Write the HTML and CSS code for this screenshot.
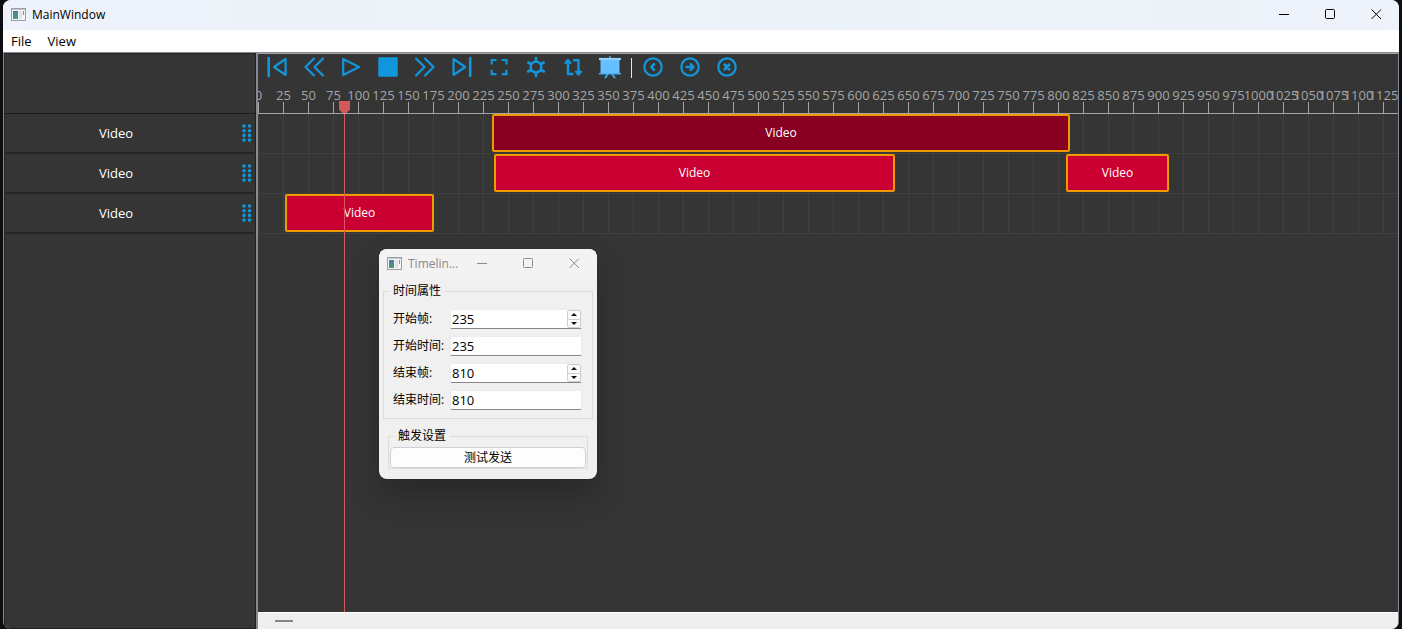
FILE: index.html
```html
<!DOCTYPE html>
<html lang="zh-CN">
<head>
<meta charset="utf-8">
<title>MainWindow</title>
<link rel="stylesheet" href="styles.css">
</head>
<body>
<svg class="defs" aria-hidden="true">
  <defs>
    <linearGradient id="pane" x1="0" y1="0" x2="0" y2="1">
      <stop offset="0" stop-color="#4a7d9c"/><stop offset="1" stop-color="#4f9a78"/>
    </linearGradient>
    <symbol id="app" viewBox="0 0 15 13">
      <rect x=".5" y=".5" width="14" height="12" fill="#f4f5f6" stroke="#9a9fa5"/>
      <path d="M1 1.5h13" stroke="#c3c8cc"/>
      <rect x="2" y="3" width="5" height="8" fill="url(#pane)"/>
      <rect x="8" y="3" width="3" height="8" fill="#e2e2e2"/>
      <rect x="12" y="3" width="1" height="4" fill="#6fa08f"/>
    </symbol>
    <symbol id="min" viewBox="0 0 11 11"><path d="M0 5.5h10" stroke="currentColor"/></symbol>
    <symbol id="max" viewBox="0 0 11 11"><rect x=".5" y=".5" width="9" height="9" rx="1" fill="none" stroke="currentColor"/></symbol>
    <symbol id="close" viewBox="0 0 11 11"><path d="M.5.5l9.500 9.500M10 .5L.5 10" stroke="currentColor"/></symbol>
    <symbol id="grip" viewBox="0 0 10 18">
      <g fill="#1296db"><circle cx="2" cy="2" r="1.800"/><circle cx="7.500" cy="2" r="1.800"/><circle cx="2" cy="6.700" r="1.800"/><circle cx="7.500" cy="6.700" r="1.800"/><circle cx="2" cy="11.400" r="1.800"/><circle cx="7.500" cy="11.400" r="1.800"/><circle cx="2" cy="16.100" r="1.800"/><circle cx="7.500" cy="16.100" r="1.800"/></g>
    </symbol>
  </defs>
</svg>
<div class="window">
  <header class="titlebar">
    <svg class="app-icon"><use href="#app"/></svg>
    <span class="title">MainWindow</span>
    <button class="sys" aria-label="Minimize"><svg><use href="#min"/></svg></button>
    <button class="sys" aria-label="Maximize"><svg><use href="#max"/></svg></button>
    <button class="sys" aria-label="Close"><svg><use href="#close"/></svg></button>
  </header>
  <nav class="menubar">
    <button class="menu">File</button>
    <button class="menu">View</button>
  </nav>
  <main class="split">
    <aside class="tracks">
      <div class="tracks-head"></div>
      <div class="track"><span class="track-name">Video</span><svg class="grip"><use href="#grip"/></svg></div>
      <div class="track"><span class="track-name">Video</span><svg class="grip"><use href="#grip"/></svg></div>
      <div class="track"><span class="track-name">Video</span><svg class="grip"><use href="#grip"/></svg></div>
    </aside>
    <section class="timeline">
      <div class="toolbar">
        <button class="tool" aria-label="First frame"><svg viewBox="0 0 25 25"><path d="M3.700 3v18" stroke-width="2.600"/><path d="M20.600 4v16L9 12z"/></svg></button>
        <button class="tool" aria-label="Rewind"><svg viewBox="0 0 25 25"><path d="M12 3.500L3.500 12l8.500 8.500M21 3.500L12.500 12l8.500 8.500"/></svg></button>
        <button class="tool" aria-label="Play"><svg viewBox="0 0 25 25"><path d="M4.200 4v16L20 12z"/></svg></button>
        <button class="tool" aria-label="Stop"><svg viewBox="0 0 25 25"><rect x="3" y="3" width="18" height="18" fill="#1296db" stroke-width="1.500"/></svg></button>
        <button class="tool" aria-label="Forward"><svg viewBox="0 0 25 25"><path d="M3 3.500l8.500 8.500L3 20.500M12 3.500l8.500 8.500-8.500 8.500"/></svg></button>
        <button class="tool" aria-label="Last frame"><svg viewBox="0 0 25 25"><path d="M3.500 4v16L15.200 12z"/><path d="M20.200 3v18" stroke-width="2.600"/></svg></button>
        <button class="tool" aria-label="Fit"><svg viewBox="0 0 25 25"><path d="M9.500 5H4.700v4.500M14.700 5h4.800v4.500M9.500 19.200H4.700v-4.500M14.700 19.200h4.800v-4.500" stroke-linejoin="miter" stroke-linecap="butt"/></svg></button>
        <button class="tool" aria-label="Settings"><svg viewBox="0 0 25 25"><circle cx="12" cy="12" r="5.300" stroke-width="2.500"/><path d="M12 3v3M12 18v3M4.200 7.500l2.600 1.500M17.200 15l2.600 1.500M19.800 7.500L17.200 9M6.800 15l-2.600 1.500" stroke-width="2.600"/></svg></button>
        <button class="tool" aria-label="Loop"><svg viewBox="0 0 25 25"><path d="M7 6v13h4.500M13 5.300h4.500V18" stroke-width="2.400"/><path d="M4 8L7 4.500 10 8zM14.500 16.500h6l-3 3.500z" fill="#1296db" stroke-width="1.500"/></svg></button>
        <button class="tool" aria-label="Presentation"><svg viewBox="0 0 25 25"><path d="M12 2v2M9.500 19.500L7.500 22.500M14.500 19.500l2 3" stroke="#3aa4ec" stroke-width="2"/><rect x="2.500" y="4" width="19" height="15" fill="#66bfff" stroke="none"/><path d="M1 4h22" stroke="#8fd0ff" stroke-linecap="butt"/><path d="M1 18.700h22" stroke="#50b0f8" stroke-width="1.500" stroke-linecap="butt"/></svg></button>
        <span class="tool-sep"></span>
        <button class="tool" aria-label="Previous"><svg viewBox="0 0 25 25"><circle cx="12" cy="12" r="8.700"/><path d="M13 9.200L10.400 12l2.600 2.800" stroke-width="2.600"/></svg></button>
        <button class="tool" aria-label="Next"><svg viewBox="0 0 25 25"><circle cx="12" cy="12" r="8.700"/><path d="M8.500 12h7M12.700 9.200l2.800 2.800-2.800 2.800" stroke-width="2.500"/></svg></button>
        <button class="tool" aria-label="Remove"><svg viewBox="0 0 25 25"><circle cx="12" cy="12" r="8.700"/><path d="M9.800 9.800l4.400 4.400M14.200 9.800l-4.400 4.400" stroke-width="2.800"/></svg></button>
      </div>
      <div class="ruler" id="ruler"></div>
      <div class="lanes">
        <div class="lane"><div class="clip selected" style="left:234px;width:578px">Video</div></div>
        <div class="lane">
          <div class="clip" style="left:236px;width:401px">Video</div>
          <div class="clip" style="left:808px;width:103px">Video</div>
        </div>
        <div class="lane"><div class="clip" style="left:27px;width:149px">Video</div></div>
      </div>
      <div class="playhead" style="left:80px"><svg viewBox="0 0 13 13"><path d="M1 0h11v8.500L8.500 12h-4L1 8.500z" fill="#d25a5a"/></svg></div>
      <div class="scrollbar"><span class="thumb"></span></div>
    </section>
  </main>
</div>

<form class="dialog" onsubmit="return false">
  <header class="dialog-bar">
    <svg class="app-icon"><use href="#app"/></svg>
    <span class="title">Timelin...</span>
    <button type="button" class="sys" aria-label="Minimize"><svg><use href="#min"/></svg></button>
    <button type="button" class="sys" aria-label="Maximize"><svg><use href="#max"/></svg></button>
    <button type="button" class="sys" aria-label="Close"><svg><use href="#close"/></svg></button>
  </header>
  <div class="dialog-body">
    <fieldset class="group fields">
      <legend>时间属性</legend>
      <label for="sf">开始帧:</label>
      <div class="field spin"><input id="sf" type="text" inputmode="numeric" value="235"><span class="steps"><button type="button" class="up" aria-label="Up"></button><button type="button" class="down" aria-label="Down"></button></span></div>
      <label for="st">开始时间:</label>
      <div class="field"><input id="st" type="text" value="235"></div>
      <label for="ef">结束帧:</label>
      <div class="field spin"><input id="ef" type="text" inputmode="numeric" value="810"><span class="steps"><button type="button" class="up" aria-label="Up"></button><button type="button" class="down" aria-label="Down"></button></span></div>
      <label for="et">结束时间:</label>
      <div class="field"><input id="et" type="text" value="810"></div>
    </fieldset>
    <fieldset class="group trigger">
      <legend>触发设置</legend>
      <button type="button" class="send">测试发送</button>
    </fieldset>
  </div>
</form>
<script src="ruler.js"></script>
</body>
</html>
```
FILE: styles.css
```css
* { box-sizing: border-box; }
body {
  margin: 0;
  height: 100vh;
  overflow: hidden;
  background: #0d0e12;
  font: 12px/16px "Open Sans", "Noto Sans CJK SC", sans-serif;
  color: #000;
}
button { font: inherit; color: inherit; background: none; border: 0; padding: 0; margin: 0; }
.defs { position: absolute; width: 0; height: 0; }

.window {
  height: 100vh;
  margin: 0 3px;
  display: flex;
  flex-direction: column;
  border-radius: 8px;
  overflow: hidden;
  background: #fff;
}
.titlebar, .dialog-bar { display: flex; align-items: center; flex: none; padding-left: 8px; }
.titlebar { height: 30px; background: linear-gradient(90deg, #eef2fb, #ecf3f8 60%, #eef2fb); padding-bottom: 2px; }
.app-icon { width: 15px; height: 13px; flex: none; }
.title { flex: 1; margin-left: 6px; padding-top: 2px; white-space: nowrap; }
.sys { width: 46px; height: 28px; display: flex; align-items: center; justify-content: center; flex: none; }
.sys svg { width: 11px; height: 11px; }

.menubar { height: 22px; flex: none; display: flex; gap: 16px; padding-left: 8px; align-items: center; font-size: 13px; }

.split { flex: 1; min-height: 0; display: flex; border: 1px solid #868a94; border-bottom: 0; background: #353535; color: #fff; }
.tracks { width: 254px; flex: none; border-right: 2px solid #868a94; box-shadow: inset 1px 1px #252525, inset -1px -1px #202020; }
.tracks-head { height: 61px; border-bottom: 1px solid #1c1c1c; }
.track { height: 40px; display: flex; align-items: center; border-bottom: 2px solid #262626; padding: 0 4px 0 0; }
.track-name { flex: 1; text-align: center; padding-right: 14px; font-size: 13px; }
.grip { width: 10px; height: 18px; flex: none; }

.timeline { position: relative; flex: 1; min-width: 0; display: flex; flex-direction: column; overflow: hidden; border-top: 1px solid #a5a5a5; }
.toolbar { display: flex; align-items: center; height: 27px; padding: 1px 0 1px 1px; flex: none; }
.tool { width: 37px; height: 25px; display: flex; align-items: center; justify-content: center; }
.tool svg { width: 25px; height: 25px; fill: none; stroke: #1296db; stroke-width: 2.2; stroke-linecap: round; stroke-linejoin: round; }
.tool-sep { width: 1px; height: 20px; margin: 0 3px 0 2px; background: #e4e4e4; }

.ruler { display: flex; height: 33px; flex: none; border-bottom: 1px solid #a5a5a5; overflow: hidden; color: #a5a5a5; font-size: 13px; }
.tick { width: 25px; flex: none; display: flex; flex-direction: column; align-items: center; justify-content: space-between; padding-top: 7px; white-space: nowrap; }
.tick:first-child { margin-left: -12px; }
.tick::after { content: ""; width: 1px; height: 11px; flex: none; background: #a5a5a5; }
.tick-label { line-height: 14px; }

.lanes { flex: 1; min-height: 0; }
.lane { position: relative; height: 40px; border-bottom: 1px solid #404040; background: repeating-linear-gradient(90deg, #404040 0 1px, transparent 1px 25px); }
.clip {
  position: absolute;
  top: 0;
  height: 38px;
  display: flex;
  align-items: center;
  justify-content: center;
  border: 2px solid #ee9b00;
  border-radius: 2px;
  background: #cb0032;
}
.clip.selected { background: #870022; }
.playhead { position: absolute; top: 47px; bottom: 17px; width: 13px; display: flex; flex-direction: column; align-items: center; }
.playhead svg { width: 13px; height: 13px; flex: none; }
.playhead::after { content: ""; width: 1px; flex: 1; background: #d25a5a; }
.scrollbar { height: 17px; flex: none; background: #efefef; border-top: 1px solid #fff; display: flex; align-items: center; padding-left: 17px; }
.thumb { width: 18px; height: 2px; background: #858585; }

.dialog {
  position: absolute;
  left: 379px;
  top: 249px;
  width: 218px;
  border-radius: 8px;
  overflow: hidden;
  background: #f0f0f0;
  box-shadow: 0 0 1px #222, 0 16px 32px rgba(0, 0, 0, .25);
}
.dialog-bar { height: 30px; background: #f3f3f3; color: #8a8a8a; padding-bottom: 2px; }
.dialog-body { padding: 4px 4px 10px; display: flex; flex-direction: column; gap: 9px; }
.group { min-width: 0; margin: 0; border: 1px solid #dcdcdc; }
.group legend { padding: 0 4px; line-height: 16px; height: 16px; }
.fields { display: grid; grid-template-columns: 57px 1fr; row-gap: 7px; align-items: center; padding: 10px 10px 8px 9px; }
.fields legend { margin-left: -4px; }
.fields label { white-space: nowrap; }
.field { height: 20px; display: flex; background: #fff; border: 1px solid #ececec; border-bottom-color: #868686; border-radius: 2px; }
.field input { flex: 1; min-width: 0; width: 100%; border: 0; outline: 0; padding: 0 1px; background: none; font: inherit; font-size: 13px; color: #000; }
.steps { width: 14px; display: flex; flex-direction: column; border: 1px solid #cfcfcf; border-radius: 2px; background: #fbfbfb; }
.steps button { flex: 1; display: flex; align-items: center; justify-content: center; }
.steps button::after { content: ""; border: 3px solid transparent; }
.steps .up { border-bottom: 1px solid #cfcfcf; }
.steps .up::after { border-top: 0; border-bottom-color: #111; }
.steps .down::after { border-bottom: 0; border-top-color: #111; }
.trigger { margin: 0 5px; padding: 3px 1px 0; }
.trigger legend { margin-left: 4px; }
.send { display: block; width: 100%; height: 21px; line-height: 19px; border: 1px solid #d0d0d0; border-radius: 4px; background: #fdfdfd; }
```
FILE: ruler.js
```js
const ruler = document.getElementById("ruler");
for (let frame = 0; frame <= 1125; frame += 25) {
  const tick = document.createElement("div");
  tick.className = "tick";
  const label = document.createElement("span");
  label.className = "tick-label";
  label.textContent = frame;
  tick.append(label);
  ruler.append(tick);
}
```
